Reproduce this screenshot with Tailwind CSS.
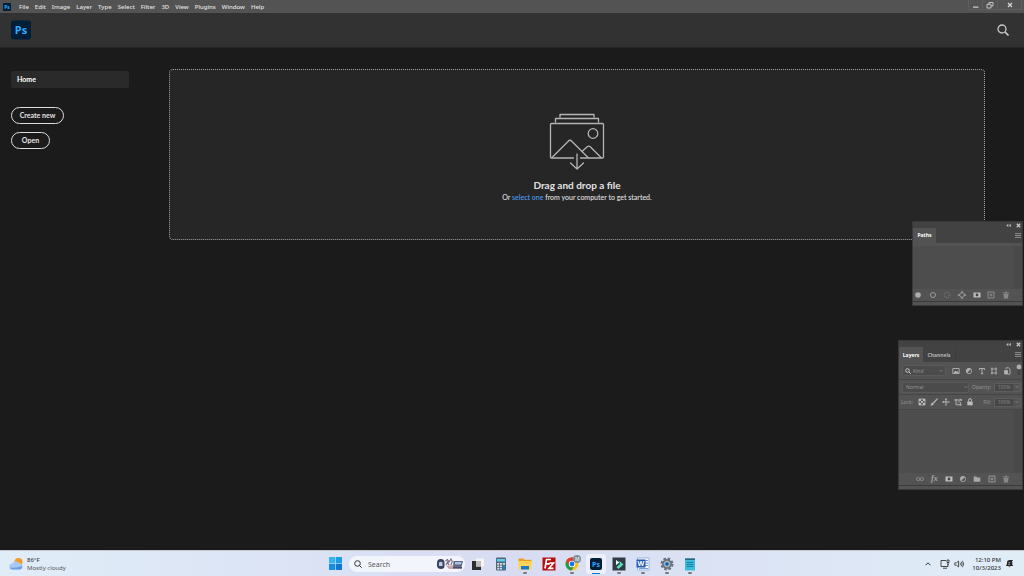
<!DOCTYPE html>
<html lang="en">
<head>
  <meta charset="UTF-8" />
  <meta name="viewport" content="width=device-width, initial-scale=1.0"/>
  <title>Photoshop Home</title>
  <script src="https://cdn.jsdelivr.net/npm/@tailwindcss/browser@4"></script>
</head>
<body class="min-h-screen flex flex-col bg-[#1b1b1b] text-[#e3e3e3] font-['Noto_Sans','Open_Sans',sans-serif] overflow-x-hidden">

  <!-- Menu bar -->
  <div class="h-[13px] bg-[#535353] flex items-center justify-between">
    <nav class="flex items-center gap-[6px] pl-[3px] text-[6px] leading-[12px] font-medium">
      <svg class="w-2 h-2 mr-[2px]" viewBox="0 0 8 8"><rect width="8" height="8" rx="1" fill="#001e36"/><text x="4" y="6" font-size="5" font-weight="700" text-anchor="middle" fill="#31a8ff">Ps</text></svg>
      <a href="#">File</a>
      <a href="#">Edit</a>
      <a href="#">Image</a>
      <a href="#">Layer</a>
      <a href="#">Type</a>
      <a href="#">Select</a>
      <a href="#">Filter</a>
      <a href="#">3D</a>
      <a href="#">View</a>
      <a href="#">Plugins</a>
      <a href="#">Window</a>
      <a href="#">Help</a>
    </nav>
    <div class="flex h-[10px] self-start mr-[2px]">
      <button aria-label="Minimize" class="w-[15px] border-x border-b border-[#5f5f5f] flex items-center justify-center"><svg class="w-2 h-2" viewBox="0 0 8 8"><path d="M1 5.500h5.500v1.200H1z" fill="#d0d0d0"/></svg></button>
      <button aria-label="Restore" class="w-[15px] border-r border-b border-[#5f5f5f] flex items-center justify-center"><svg class="w-2 h-2" viewBox="0 0 8 8" fill="none" stroke="#cfcfcf" stroke-width=".9"><path d="M3 3V1.500h4V5H5.200M1 3.300h4V7H1z"/></svg></button>
      <button aria-label="Close" class="w-[24px] border-r border-b border-[#5f5f5f] flex items-center justify-center"><svg class="w-2 h-2" viewBox="0 0 8 8" stroke="#d6d6d6" stroke-width="1.200"><path d="M2 2l4 4M6 2L2 6"/></svg></button>
    </div>
  </div>

  <!-- App header -->
  <header class="h-[35px] bg-[#323232] border-b border-[#262626] flex items-center justify-between pl-[11px] pr-[15px]">
    <svg class="w-5 h-5" viewBox="0 0 20 20"><rect width="20" height="19" y=".5" rx="3" fill="#001e36"/><text x="10" y="14" font-size="11" font-weight="700" text-anchor="middle" fill="#31a8ff">Ps</text></svg>
    <button aria-label="Search"><svg class="w-3 h-3" viewBox="0 0 12 12" fill="none" stroke="#c8c8c8" stroke-width="1.300"><circle cx="5" cy="5" r="4"/><path d="M8 8l3.500 3.500" stroke-width="1.600"/></svg></button>
  </header>

  <main class="flex-1 flex pl-[11px] pr-[39px] pt-[21px]">
    <aside class="w-[118px] mr-10 pt-[2px] flex flex-col items-start font-['Lato','Open_Sans',sans-serif] font-bold text-[7px]">
      <a href="#" class="w-full h-[17px] rounded-[2px] bg-[#2a2a2a] pl-[6px] leading-[17px] text-white mb-[19px]">Home</a>
      <button class="h-[17px] w-[53px] rounded-full border border-[#dcdcdc] mb-2">Create new</button>
      <button class="h-[17px] w-[39px] rounded-full border border-[#dcdcdc]">Open</button>
    </aside>

    <section class="flex-1 h-[171px] rounded-[4px] border border-dotted border-[#a0a0a0] bg-[#262626] flex flex-col items-center pt-[43px] font-['Lato','Open_Sans',sans-serif]">
      <svg class="w-14 h-[58px]" viewBox="0 0 56 58" fill="none" stroke="#b4b4b4" stroke-width="1.300" stroke-linejoin="round" stroke-linecap="round">
        <path d="M11 4V1.500h34V4M6.500 9V5.500h43V9"/>
        <path d="M24.500 45H2.500a1 1 0 0 1-1-1V11.500a1 1 0 0 1 1-1h51a1 1 0 0 1 1 1V44a1 1 0 0 1-1 1H31.500"/>
        <circle cx="44" cy="20.500" r="4.800"/>
        <path d="M3 44.500L19 28.500q2-2.500 4 0L39 44.500M33.500 38l5-4.500q1.500-1 3 .5L52 44.500"/>
        <path d="M28 41v14.500M21.500 50l6.500 6 6.500-6"/>
      </svg>
      <h1 class="text-[10px] leading-[14px] font-bold mt-[7px]">Drag and drop a file</h1>
      <p class="text-[7px] leading-[10px] font-medium">Or <a href="#" class="text-[#4b9cf5]">select one</a> from your computer to get started.</p>
    </section>
  </main>

  <!-- Paths panel -->
  <section class="absolute right-[1px] top-[221px] w-[111px] bg-[#535353] border border-[#393939] text-[5px] font-['Open_Sans',sans-serif]">
    <div class="h-[6px] bg-[#424242] flex items-center justify-end gap-[5px] pr-px">
      <button aria-label="Collapse"><svg class="w-[5px] h-[5px]" viewBox="0 0 5 5" fill="#b8b8b8"><path d="M2.300.8v3.400L.3 2.500zM4.800.8v3.400l-2-1.700z"/></svg></button>
      <button aria-label="Close"><svg class="w-[5px] h-[5px]" viewBox="0 0 5 5" stroke="#c4c4c4" stroke-width="1.300"><path d="M.8.8l3.400 3.400M4.200.8L.8 4.200"/></svg></button>
    </div>
    <div class="h-[15px] bg-[#424242] flex items-center justify-between pr-px">
      <button class="h-full w-[23px] bg-[#535353] font-bold text-white">Paths</button>
      <button aria-label="Menu"><svg class="w-[6px] h-[5px]" viewBox="0 0 6 5" stroke="#8c8c8c"><path d="M0 .6h6M0 2.500h6M0 4.400h6"/></svg></button>
    </div>
    <div class="h-[46px] border-t-3 border-[#535353] bg-[#4d4d4d] flex justify-end"><div class="w-2 bg-[#494949]"></div></div>
    <div class="h-[12px] flex items-center justify-between pl-px pr-[12px] text-[#9a9a9a]">
      <button aria-label="Fill path"><svg class="w-2 h-2" viewBox="0 0 8 8"><circle cx="4" cy="4" r="2.800" fill="#adadad"/></svg></button>
      <button aria-label="Stroke path"><svg class="w-2 h-2" viewBox="0 0 8 8" fill="none" stroke="currentColor"><circle cx="4" cy="4" r="2.500"/></svg></button>
      <button aria-label="Load selection"><svg class="w-2 h-2" viewBox="0 0 8 8" fill="none" stroke="#8a8a8a"><circle cx="4" cy="4" r="2.700" stroke-dasharray="1 1.100"/></svg></button>
      <button aria-label="Make work path"><svg class="w-2 h-2" viewBox="0 0 8 8" fill="none" stroke="currentColor"><circle cx="4" cy="4" r="2.300"/><path d="M4 0v2M4 6v2M0 4h2M6 4h2" stroke-width="1.500"/></svg></button>
      <button aria-label="Add mask"><svg class="w-2 h-2" viewBox="0 0 8 8"><path d="M.5 1.500h7v5h-7z" fill="#bdbdbd"/><circle cx="4" cy="4" r="1.400" fill="#444"/></svg></button>
      <button aria-label="New path"><svg class="w-2 h-2" viewBox="0 0 8 8" fill="none" stroke="currentColor" stroke-width=".8"><path d="M1 1h6v6H1zM4 2.500v3M2.500 4h3"/></svg></button>
      <button aria-label="Delete path"><svg class="w-2 h-2" viewBox="0 0 8 8" fill="#888"><path d="M1 1.500h2V.7h2v.8h2v1H1zM1.500 3h5L6 7.500H2z"/></svg></button>
    </div>
    <div class="h-1 border-t border-[#3a3a3a]"></div>
  </section>

  <!-- Layers panel -->
  <section class="absolute right-[1px] top-[340px] w-[125px] bg-[#535353] border border-[#393939] text-[5px] leading-[8px] text-[#9a9a9a] font-['Open_Sans',sans-serif]">
    <div class="h-[6px] bg-[#424242] flex items-center justify-end gap-[5px] pr-px">
      <button aria-label="Collapse"><svg class="w-[5px] h-[5px]" viewBox="0 0 5 5" fill="#b8b8b8"><path d="M2.300.8v3.400L.3 2.500zM4.800.8v3.400l-2-1.700z"/></svg></button>
      <button aria-label="Close"><svg class="w-[5px] h-[5px]" viewBox="0 0 5 5" stroke="#c4c4c4" stroke-width="1.300"><path d="M.8.8l3.400 3.400M4.200.8L.8 4.200"/></svg></button>
    </div>
    <div class="h-[15px] bg-[#424242] flex items-center pr-px font-bold">
      <button class="h-full w-[24px] bg-[#535353] text-white">Layers</button>
      <button class="h-full w-[33px] border-r border-[#3c3c3c] text-[#b4b4b4]">Channels</button>
      <button aria-label="Menu" class="ml-auto"><svg class="w-[6px] h-[5px]" viewBox="0 0 6 5" stroke="#8c8c8c"><path d="M0 .6h6M0 2.500h6M0 4.400h6"/></svg></button>
    </div>

    <div class="h-[18px] border-b border-[#454545] flex items-center pl-[3px]">
      <div class="w-[44px] h-[11px] bg-[#4b4b4b] border border-[#5a5a5a] rounded-[1px] flex items-center pl-[2px]">
        <svg class="w-[6px] h-[6px]" viewBox="0 0 6 6" fill="none" stroke="#c4c4c4"><circle cx="2.500" cy="2.500" r="1.800"/><path d="M4 4l1.800 1.800"/></svg>
        <select aria-label="Filter type" class="appearance-none w-[28px] pl-[2px] text-[#9a9a9a]"><option>Kind</option></select>
        <svg class="w-1 h-1" viewBox="0 0 4 4" fill="none" stroke="#888" stroke-width=".7"><path d="M.5 1L2 2.700 3.500 1"/></svg>
      </div>
      <div class="flex-1 flex justify-between pl-[6px] pr-[5px] text-[#b0b0b0]">
        <button aria-label="Pixel layers"><svg class="w-2 h-2" viewBox="0 0 8 8" fill="none" stroke="currentColor" stroke-width=".9"><path d="M.8 1.500h6.400v5H.8z"/><path d="M1.500 6L3.500 3.500l1.300 1.300.8-.8L7 6z" fill="currentColor" stroke="none"/></svg></button>
        <button aria-label="Adjustment layers"><svg class="w-2 h-2" viewBox="0 0 8 8"><circle cx="4" cy="4" r="2.700" fill="none" stroke="currentColor" stroke-width=".8"/><path d="M6 2A2.800 2.800 0 1 0 2 6z" fill="currentColor"/></svg></button>
        <button aria-label="Type layers"><svg class="w-2 h-2" viewBox="0 0 8 8" fill="none" stroke="currentColor"><path d="M1.500 3V1.500h5V3M4 1.500v5M2.800 6.700h2.400"/></svg></button>
        <button aria-label="Shape layers"><svg class="w-2 h-2" viewBox="0 0 8 8" fill="none" stroke="currentColor" stroke-width=".9"><path d="M2 .5v7M6 .5v7M.8 2h6.400M.8 6h6.400"/></svg></button>
        <button aria-label="Smart objects"><svg class="w-2 h-2" viewBox="0 0 8 8" fill="none" stroke="currentColor" stroke-width=".9"><path d="M3 2V.8h2.500L7 2.200V7.200H4.500"/><path d="M1.500 3.500h3v3.500h-3z" fill="currentColor"/></svg></button>
      </div>
      <button aria-label="Toggle filter"><svg class="w-[6px] h-[13px]" viewBox="0 0 6 13"><path d="M1.500 4h3v7h-3z" fill="#474747"/><circle cx="3" cy="3" r="2.400" fill="#adadad"/></svg></button>
    </div>

    <div class="h-[15px] border-b border-[#454545] flex items-center justify-between pl-[3px] pr-px">
      <div class="w-[67px] h-[11px] bg-[#4b4b4b] border border-[#5a5a5a] rounded-[1px] flex items-center pl-px">
        <select aria-label="Blend mode" class="appearance-none w-[60px] pl-[2px]"><option>Normal</option></select>
        <svg class="w-1 h-1" viewBox="0 0 4 4" fill="none" stroke="#888" stroke-width=".7"><path d="M.5 1L2 2.700 3.500 1"/></svg>
      </div>
      <label for="opacity">Opacity:</label>
      <div class="w-[27px] h-[9px] flex items-center border border-[#5d5d5d]">
        <input id="opacity" type="text" value="100%" class="w-[18px] h-full bg-[#474747] text-center text-[#888]"/>
        <svg class="w-1 h-1 ml-[2px]" viewBox="0 0 4 4" fill="none" stroke="#888" stroke-width=".7"><path d="M.5 1L2 2.700 3.500 1"/></svg>
      </div>
    </div>

    <div class="h-[15px] border-b border-[#464646] flex items-center pl-[2px] pr-px">
      <span class="w-[17px]">Lock:</span>
      <div class="flex gap-1 text-[#bdbdbd]">
        <button aria-label="Lock transparent pixels"><svg class="w-2 h-2" viewBox="0 0 8 8"><path d="M1 1h6v6H1z" fill="none" stroke="currentColor" stroke-width=".8"/><path d="M1 1h2v2H1zM5 1h2v2H5zM3 3h2v2H3zM1 5h2v2H1zM5 5h2v2H5z" fill="currentColor"/></svg></button>
        <button aria-label="Lock image pixels"><svg class="w-2 h-2" viewBox="0 0 8 8"><path d="M7.200.5L3.300 4.200l.8.8L7.700 1zM2.800 4.600Q1.200 5 .8 7.300q2.300.2 3-1.500z" fill="currentColor" stroke="currentColor" stroke-width=".4"/></svg></button>
        <button aria-label="Lock position"><svg class="w-2 h-2" viewBox="0 0 8 8" fill="currentColor"><path d="M3.600 1h.8v6h-.8zM1 3.600h6v.8H1zM4 0l1.300 1.700H2.700zM4 8l1.300-1.700H2.700zM0 4l1.700-1.300v2.600zM8 4L6.300 2.700v2.600z"/></svg></button>
        <button aria-label="Prevent nesting"><svg class="w-2 h-2" viewBox="0 0 8 8" fill="none" stroke="currentColor" stroke-width=".9"><path d="M.3 2h5.200M2 1v5.800h5.700M6.300 4v3.500M4 4.500L7 1.500M5.500 1.300h1.800v1.800"/></svg></button>
        <button aria-label="Lock all"><svg class="w-2 h-2" viewBox="0 0 8 8"><path d="M1.300 3.500h5.400V7.300H1.300z" fill="currentColor"/><path d="M2.500 3.500V2.200a1.500 1.500 0 0 1 3 0v1.300" fill="none" stroke="currentColor"/></svg></button>
      </div>
      <label for="fill" class="ml-auto mr-[3px]">Fill:</label>
      <div class="w-[27px] h-[9px] flex items-center border border-[#5d5d5d]">
        <input id="fill" type="text" value="100%" class="w-[18px] h-full bg-[#474747] text-center text-[#888]"/>
        <svg class="w-1 h-1 ml-[2px]" viewBox="0 0 4 4" fill="none" stroke="#888" stroke-width=".7"><path d="M.5 1L2 2.700 3.500 1"/></svg>
      </div>
    </div>

    <div class="h-[63px] bg-[#4d4d4d] flex justify-end"><div class="w-2 bg-[#494949]"></div></div>
    <div class="h-[12px] flex items-center justify-between pl-[17px] pr-[12px] text-[#a8a8a8]">
      <button aria-label="Link layers"><svg class="w-2 h-2" viewBox="0 0 8 8" fill="none" stroke="#8e8e8e" stroke-width=".9"><rect x=".5" y="2.500" width="3.500" height="3" rx="1.500"/><rect x="4" y="2.500" width="3.500" height="3" rx="1.500"/></svg></button>
      <button aria-label="Layer style" class="w-2 text-[8px] italic font-bold font-['Liberation_Serif',serif]">fx</button>
      <button aria-label="Add mask"><svg class="w-2 h-2" viewBox="0 0 8 8"><path d="M.5 1.500h7v5h-7z" fill="#bdbdbd"/><circle cx="4" cy="4" r="1.400" fill="#444"/></svg></button>
      <button aria-label="New adjustment layer"><svg class="w-2 h-2" viewBox="0 0 8 8"><circle cx="4" cy="4" r="2.700" fill="none" stroke="currentColor" stroke-width=".8"/><path d="M6 2A2.800 2.800 0 1 0 2 6z" fill="currentColor"/></svg></button>
      <button aria-label="New group"><svg class="w-2 h-2" viewBox="0 0 8 8"><path d="M.7 1.500h2.600l.8 1h3.200v4.200H.7z" fill="currentColor"/></svg></button>
      <button aria-label="New layer"><svg class="w-2 h-2" viewBox="0 0 8 8" fill="none" stroke="currentColor" stroke-width=".8"><path d="M1 1h6v6H1zM4 2.500v3M2.500 4h3"/></svg></button>
      <button aria-label="Delete layer"><svg class="w-2 h-2" viewBox="0 0 8 8" fill="#888"><path d="M1 1.500h2V.7h2v.8h2v1H1zM1.500 3h5L6 7.500H2z"/></svg></button>
    </div>
    <div class="h-1 border-t border-[#3a3a3a]"></div>
  </section>

  <!-- Windows taskbar -->
  <footer class="h-[26px] bg-linear-to-r from-[#e0edf8] via-[#d8dcf2] to-[#e0edf7] border-t border-[#c9c5cf] grid grid-cols-[1fr_auto_1fr] items-center text-[#3c3c3c]">
    <div class="flex items-center gap-1 pl-[9px] text-[6px] leading-[8px]">
      <svg class="w-[14px] h-[14px]" viewBox="0 0 14 14">
        <circle cx="9.500" cy="5" r="4" fill="#f59b23"/>
        <path d="M3.500 12.500a3 3 0 0 1-.3-6A4 4 0 0 1 10 6a3.300 3.300 0 0 1 .8 6.500z" fill="#a9c8f4"/>
        <path d="M3.500 12.500a3 3 0 0 1-2.700-2q6 1 12.400-1.500a3 3 0 0 1-2.400 3.500z" fill="#6fa0e6"/>
      </svg>
      <div>
        <div class="text-[#1f1f1f]">86°F</div>
        <div class="text-[#555]">Mostly cloudy</div>
      </div>
    </div>

    <div class="flex items-center">
      <button aria-label="Start" class="w-[26px] flex justify-center"><svg class="w-[13px] h-[13px]" viewBox="0 0 13 13"><path d="M0 0h6.200v6.200H0z" fill="#35b5ee"/><path d="M6.800 0H13v6.200H6.800z" fill="#1e9de6"/><path d="M0 6.800h6.200V13H0z" fill="#1590e0"/><path d="M6.800 6.800H13V13H6.800z" fill="#0a78d4"/></svg></button>
      <div class="w-[116px] h-4 mx-px rounded-full bg-[#f3f5fc] flex items-center pl-[5px] pr-[2px]">
        <svg class="w-2 h-2 shrink-0" viewBox="0 0 8 8" fill="none" stroke="#333"><circle cx="3.500" cy="3.500" r="2.800"/><path d="M5.500 5.500L7.700 7.700"/></svg>
        <input type="text" aria-label="Search" placeholder="Search" class="w-0 flex-1 h-4 pt-px ml-[6px] text-[7px] placeholder:text-[#555]"/>
        <svg class="w-[26px] h-3 shrink-0" viewBox="0 0 26 12">
          <path d="M0 5Q0 1 3.800 1T7.500 5v3Q7.500 11 4 11T0 8z" fill="#39425f"/><path d="M2 4.500q1.700-1.500 3.500 0V8H2z" fill="#c3cbe0"/>
          <path d="M8.500 3l2-1.500L12 4l2-3 1.500 3M9 7l1.500-3L12 7M14 7l1-3" fill="none" stroke="#776985" stroke-width="1.100"/>
          <path d="M16.500 3h9.500L24.500 9H16z" fill="#5d6681"/><path d="M18 4h6.500L24 6.500h-6z" fill="#a9c5e3"/><path d="M9 7.500h7l9 1.500v2H12z" fill="#a96f76" fill-opacity=".6"/><path d="M16 9h9v1.500h-9z" fill="#434d70"/>
        </svg>
      </div>

      <div class="w-[236px] grid grid-cols-10 justify-items-center items-center">
        <button aria-label="Task view"><svg class="w-[14px] h-[14px]" viewBox="0 0 14 14"><path d="M1 4h9v9H1z" fill="#2c2c2c"/><path d="M5 1.500h8v8H5z" fill="#f4f4f4"/><path d="M5 4h5v5.500H5z" fill="#bbb"/></svg></button>
        <button aria-label="Calculator"><svg class="w-[14px] h-[14px]" viewBox="0 0 14 14"><rect x="2" y=".5" width="10" height="13" rx="1" fill="#546474"/><path d="M3 2h8v2.500H3z" fill="#57d2ef"/><path d="M3.200 6h2v1.700h-2zM6 6h2v1.700H6zM3.200 8.500h2v1.700h-2zM6 8.500h2v1.700H6zM3.200 11h2v1.500h-2zM6 11h2v1.500H6zM8.800 6H11v1.700H8.800z" fill="#d6e0e8"/><path d="M8.800 8.500H11v4H8.800z" fill="#1486cf"/></svg></button>
        <button aria-label="File Explorer" class="relative"><svg class="w-[14px] h-[14px]" viewBox="0 0 14 14"><path d="M.5 1.500h4.700l1.300 1.300h7V5H.5z" fill="#e8a020"/><path d="M.5 4h13v8.500H.5z" fill="#ffd353"/><path d="M3 9h8v3.500H3z" fill="#187bc9"/></svg><span class="absolute -bottom-[3px] left-[5px] w-1 h-[2px] rounded-full bg-[#7a7a80]"></span></button>
        <button aria-label="FileZilla"><svg class="w-[14px] h-[14px]" viewBox="0 0 14 14"><rect x=".5" y=".5" width="13" height="13" fill="#b80d0d"/><path d="M3 11.500L4.500 2.500H9M3.800 6.800h4M7.500 6h4L7 11.300h4.500" fill="none" stroke="#fff" stroke-width="1.700"/></svg></button>
        <button aria-label="Chrome" class="relative"><svg class="w-[14px] h-[14px]" viewBox="0 0 14 14"><circle cx="7" cy="7" r="6.500" fill="#fbc116"/><path d="M7 7L1.400 3.700A6.500 6.500 0 0 1 12.600 3.700z" fill="#e33b2e"/><path d="M7 7L1.400 3.700A6.500 6.500 0 0 0 6.500 13.500L9.500 8.500z" fill="#229b48"/><path d="M1.400 3.700A6.500 6.500 0 0 1 12.600 3.700H7L4 8z" fill="#e33b2e"/><circle cx="7" cy="7" r="3.200" fill="#fff"/><circle cx="7" cy="7" r="2.400" fill="#1a73e8"/></svg><span class="absolute -right-[2px] -top-[2px] w-2 h-2 rounded-full bg-[#78909c] text-white text-[5px] leading-[8px] text-center">M</span><span class="absolute -bottom-[3px] left-[5px] w-1 h-[2px] rounded-full bg-[#7a7a80]"></span></button>
        <button aria-label="Photoshop" class="relative w-5 h-5 rounded-[2px] bg-[#edf0fa] flex items-center justify-center"><svg class="w-3 h-3" viewBox="0 0 12 12"><rect width="12" height="12" rx="2" fill="#001e36"/><text x="6" y="8.500" font-size="7" font-weight="700" text-anchor="middle" fill="#31a8ff">Ps</text></svg><span class="absolute bottom-0 left-[6px] w-2 h-[1px] bg-[#0078d4]"></span></button>
        <button aria-label="Filmora" class="relative"><svg class="w-[14px] h-[14px]" viewBox="0 0 14 14"><rect x=".5" y=".5" width="13" height="13" fill="#303b46"/><path d="M4 3l3.500 2.500L4 8z" fill="#e8fff8"/><path d="M7.500 4L11.500 7.500l-5 4.500-2-2L8 7z" fill="#55e0bb"/></svg><span class="absolute -bottom-[3px] left-[5px] w-1 h-[2px] rounded-full bg-[#7a7a80]"></span></button>
        <button aria-label="Word" class="relative"><svg class="w-[14px] h-[14px]" viewBox="0 0 14 14"><path d="M1.500 1h11.500v12H1.500z" fill="#f7f9fd" stroke="#6b93d2" stroke-width=".6"/><path d="M8 3.500h4M8 6h4M8 8.500h4M3 11.500h9" stroke="#5286cd" stroke-width=".8"/><path d="M.5 2.500h9v8h-9z" fill="#2459b2"/><text x="5" y="9" font-size="7" font-weight="700" text-anchor="middle" fill="#fff">W</text></svg><span class="absolute -bottom-[3px] left-[5px] w-1 h-[2px] rounded-full bg-[#7a7a80]"></span></button>
        <button aria-label="Settings" class="relative"><svg class="w-[14px] h-[14px]" viewBox="0 0 14 14"><circle cx="7" cy="7" r="5.300" fill="none" stroke="#69727c" stroke-width="2.400" stroke-dasharray="2.500 1.660"/><circle cx="7" cy="7" r="4.200" fill="#8d979f" stroke="#69727c" stroke-width="1.400"/><circle cx="7" cy="7" r="2.300" fill="#145fae" stroke="#d8e2ec" stroke-width=".7"/></svg><span class="absolute -bottom-[3px] left-[5px] w-1 h-[2px] rounded-full bg-[#7a7a80]"></span></button>
        <button aria-label="Notepad" class="relative"><svg class="w-[14px] h-[14px]" viewBox="0 0 14 14"><path d="M2 1.500h10v12H2z" fill="#3dbbdb"/><path d="M2 1h10v2H2z" fill="#246a86"/><path d="M3.500 5.500h7M3.500 7.500h7M3.500 9.500h7" stroke="#0f6e9a" stroke-width=".8"/><path d="M3 .3v1.500M5 .3v1.500M7 .3v1.500M9 .3v1.500M11 .3v1.500" stroke="#d9edf3" stroke-width=".7"/></svg><span class="absolute -bottom-[3px] left-[5px] w-1 h-[2px] rounded-full bg-[#7a7a80]"></span></button>
      </div>
    </div>

    <div class="flex items-center justify-end pr-[10px] text-[#333]">
      <button aria-label="Hidden icons" class="mr-2"><svg class="w-2 h-2" viewBox="0 0 8 8" fill="none" stroke="currentColor"><path d="M1.500 5.300L4 2.800l2.500 2.500"/></svg></button>
      <button aria-label="Network" class="mr-1"><svg class="w-[10px] h-[10px]" viewBox="0 0 10 10" fill="none" stroke="currentColor" stroke-width=".9"><path d="M6 1.500H1v6h7V5M3 9.200h4M7 1h2v2.500H7zM8 3.500V6"/></svg></button>
      <button aria-label="Volume" class="mr-2"><svg class="w-[10px] h-[10px]" viewBox="0 0 10 10" fill="none" stroke="currentColor" stroke-width=".8"><path d="M.8 3.800H2.500L4.500 2v6L2.500 6.200H.8zM6 3.800q1 1.200 0 2.400M7.200 2.800q2 2.200 0 4.400M8.400 1.800q2.600 3.200 0 6.400"/></svg></button>
      <div class="text-right text-[6px] leading-[8px] font-medium">
        <div>12:10 PM</div>
        <div>10/3/2023</div>
      </div>
      <button aria-label="Notifications" class="ml-1"><svg class="w-[9px] h-[9px]" viewBox="0 0 9 9"><path d="M.8 7L2 5V3q.3-2 2.500-2T7 3v2l1.200 2zM3.300 7.500h2.400q-1.200 1.500-2.400 0z" fill="#252525"/><path d="M5 1.500h2.500L5.200 4h2.500" fill="none" stroke="#252525"/><path d="M3.500 3.500h1.500l-1.500 2H5" fill="none" stroke="#e0eaf5" stroke-width=".5"/></svg></button>
    </div>
  </footer>
</body>
</html>
